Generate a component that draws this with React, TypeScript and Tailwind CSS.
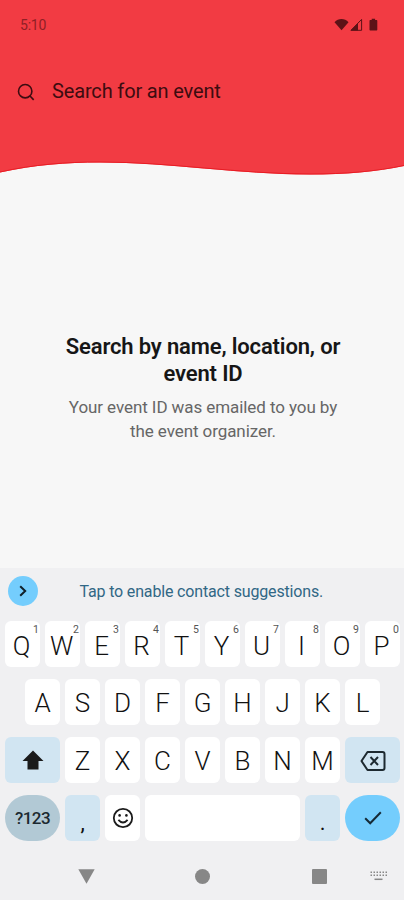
import type { ReactNode } from "react";

const topRow = ["Q", "W", "E", "R", "T", "Y", "U", "I", "O", "P"];
const homeRow = ["A", "S", "D", "F", "G", "H", "J", "K", "L"];
const bottomRow = ["Z", "X", "C", "V", "B", "N", "M"];

interface KeyProps {
  children?: ReactNode;
  hint?: string;
  className?: string;
}

function Key({ children, hint, className = "w-[34.5px] rounded-[6px] bg-white" }: KeyProps) {
  return (
    <div
      className={`relative flex h-[46.5px] shrink-0 items-center justify-center text-[26px] font-[350] leading-none text-[#111111] ${className}`}
    >
      {children}
      {hint && (
        <span className="absolute right-[1px] top-[4px] text-[10.5px] font-normal leading-none text-[#555555]">
          {hint}
        </span>
      )}
    </div>
  );
}

function StatusIcons() {
  return (
    <svg width="44" height="14" viewBox="0 0 44 14" className="text-[#5c1217]">
      <path d="M0.5 4.2C4.2 0 10.8 0 14.5 4.2L7.5 12.2Z" fill="currentColor" />
      <path d="M27.6 1.4V12.3H17Z" fill="none" stroke="currentColor" strokeWidth="1" />
      <path d="M24 5V12.5H16.5Z" fill="currentColor" />
      <path
        d="M37.7 0.8h3.4v1.2h1.2c.7 0 1 .4 1 1v8.4c0 .7-.4 1.1-1 1.1h-5.7c-.7 0-1.1-.4-1.1-1.1V3c0-.6.4-1 1-1h1.2z"
        fill="currentColor"
      />
    </svg>
  );
}

function Header() {
  return (
    <header className="h-[176px] bg-[#f23b43]">
      <div className="flex h-[50px] items-center justify-between pl-5 pr-[26px]">
        <span className="text-[14px] leading-none tracking-[-0.2px] text-[#8f2025]">5:10</span>
        <StatusIcons />
      </div>
      <div className="flex h-[83px] items-center gap-[17px] pl-[17px]">
        <svg width="18" height="18" viewBox="0 0 18 18" fill="none" stroke="#3d0c10" strokeWidth="1.6" className="mt-px">
          <circle cx="8.2" cy="8.2" r="6.7" />
          <path d="M13 13l3.7 3.9" />
        </svg>
        <span className="-mt-[2px] text-[20px] leading-none tracking-[-0.15px] text-[#3d0c10]">
          Search for an event
        </span>
      </div>
      <svg width="404" height="43" viewBox="0 133 404 43" className="block">
        <path
          d="M0 172.5C34 165 66 162.500 100 162.500C170 162.500 238 174.500 310 174.500C345 174.500 376 172 404 166V176H0Z"
          fill="#f7f7f7"
        />
        <path
          d="M0 172C34 164.500 66 162 100 162C170 162 238 174 310 174C345 174 376 171.500 404 165.500"
          fill="none"
          stroke="#e81c24"
          strokeWidth="1"
        />
      </svg>
    </header>
  );
}

function Keyboard() {
  return (
    <section className="h-[332px] bg-[#f0f0f2]">
      <div className="flex h-[52.5px] items-start pl-2 pt-2">
        <div className="flex size-[30px] items-center justify-center rounded-full bg-[#74cdfd]">
          <svg width="10" height="12" viewBox="0 0 10 12" fill="none" stroke="#10202a" strokeWidth="2">
            <path d="M2.2 1.2L7.2 6L2.2 10.8" />
          </svg>
        </div>
        <p className="ml-[41.5px] pt-[8px] text-[16px] leading-none tracking-[-0.16px] text-[#316785]">
          Tap to enable contact suggestions.
        </p>
      </div>

      <div className="flex flex-col gap-[11.5px] pl-[5.3px]">
        <div className="flex gap-[5.5px]">
          {topRow.map((letter, i) => (
            <Key key={letter} hint={String((i + 1) % 10)}>
              <span className="-ml-[2px] pt-[4px]">{letter}</span>
            </Key>
          ))}
        </div>
        <div className="flex gap-[5.5px] pl-[20px]">
          {homeRow.map((letter) => (
            <Key key={letter}>
              <span className="pt-[3px]">{letter}</span>
            </Key>
          ))}
        </div>
        <div className="flex gap-[5.5px]">
          <Key className="w-[54.5px] rounded-[6px] bg-[#d1e5f2]">
            <svg width="22" height="20" viewBox="0 0 22 20" fill="#1b1b1b">
              <path d="M11 0.5L21.5 11H16.5V19.5H5.5V11H0.5Z" />
            </svg>
          </Key>
          {bottomRow.map((letter) => (
            <Key key={letter}>
              <span className="pt-[3px]">{letter}</span>
            </Key>
          ))}
          <Key className="w-[54.5px] rounded-[6px] bg-[#d1e5f2]">
            <svg width="26" height="20" viewBox="0 0 26 20" fill="none" stroke="#1d2930" strokeWidth="2" className="mt-[2px]">
              <path d="M7.5 1H22.5Q24.5 1 24.5 3V17Q24.5 19 22.5 19H7.5L1.5 10Z" strokeLinejoin="round" />
              <path d="M10.5 6L18 14M18 6L10.5 14" />
            </svg>
          </Key>
        </div>
        <div className="flex gap-[5.5px]">
          <Key className="w-[54.5px] rounded-full bg-[#b2c9d5]">
            <span className="pt-[2px] text-[17px] font-medium tracking-[-0.5px] text-[#1c2930]">?123</span>
          </Key>
          <Key className="w-[34.5px] rounded-[6px] bg-[#d1e5f2]">
            <span className="pt-[11px] text-[22px] font-normal">,</span>
          </Key>
          <Key>
            <svg width="22" height="22" viewBox="0 0 22 22" fill="none" stroke="#1b1b1b" strokeWidth="1.8">
              <circle cx="11" cy="11" r="9.2" />
              <path d="M6.4 12.8Q11 18.2 15.6 12.8" />
              <circle cx="7.6" cy="8.4" r="1.3" fill="#1b1b1b" stroke="none" />
              <circle cx="14.4" cy="8.4" r="1.3" fill="#1b1b1b" stroke="none" />
            </svg>
          </Key>
          <Key className="w-[154.5px] rounded-[6px] bg-white" />
          <Key className="w-[34.5px] rounded-[6px] bg-[#d1e5f2]">
            <span className="pt-[11px] text-[22px] font-normal">.</span>
          </Key>
          <Key className="w-[54.5px] rounded-full bg-[#74cdfd]">
            <svg width="18" height="14" viewBox="0 0 18 14" fill="none" stroke="#152a36" strokeWidth="2">
              <path d="M1.2 7.2L6.2 12.2L16.8 1.2" />
            </svg>
          </Key>
        </div>
      </div>

      <nav className="flex h-[70px] items-center pl-[77.5px] text-[#878787]">
        <svg width="17" height="15" viewBox="0 0 17 15" fill="currentColor">
          <path d="M0.3 0.3H16.7L8.5 14.8Z" />
        </svg>
        <span className="ml-[100.5px] mt-px size-[15px] rounded-full bg-[#878787]" />
        <span className="ml-[101.5px] mt-px size-[15px] rounded-[1px] bg-[#878787]" />
        <svg width="17" height="10" viewBox="0 0 17 10" fill="none" stroke="currentColor" className="ml-[43px]">
          <path d="M0.5 1.2H17M0.5 4.2H17" strokeWidth="1.4" strokeDasharray="1.5 1.5" />
          <path d="M4.5 8.3H12.5" strokeWidth="1.5" />
        </svg>
      </nav>
    </section>
  );
}

export default function App() {
  return (
    <div className="flex h-[900px] w-[404px] flex-col overflow-hidden bg-[#f7f7f7] font-['Roboto',sans-serif]">
      <Header />
      <main className="flex-1 pt-[157px] text-center">
        <h1 className="pl-[2px] text-[22px] font-semibold leading-[27px] tracking-[-0.15px] text-[#161616]">
          Search by name, location, or
          <br />
          event ID
        </h1>
        <p className="mt-[9px] pl-[2px] text-[17px] leading-[23.5px] tracking-[-0.08px] text-[#666666]">
          Your event ID was emailed to you by
          <br />
          the event organizer.
        </p>
      </main>
      <Keyboard />
    </div>
  );
}
